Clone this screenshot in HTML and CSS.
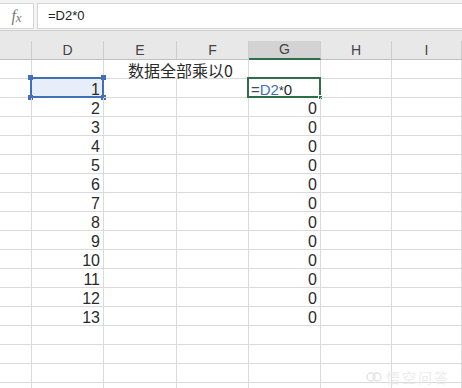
FILE: index.html
```html
<!DOCTYPE html>
<html lang="zh">
  <head>
    <meta charset="UTF-8" />
    <title>Sheet</title>
    <link rel="stylesheet" href="styles.css">
  </head>
  <body>
    <div class="formula-bar">
      <div class="fx"><i>f</i><i class="x">x</i></div>
      <div class="formula">=D2*0</div>
    </div>
    <div class="band"></div>
    <div class="sheet">
      <div class="h"></div><div class="h">D</div><div class="h">E</div><div class="h">F</div><div class="h active">G</div><div class="h">H</div><div class="h">I</div>

      <div class="c"></div><div class="c"></div><div class="c nb"><span class="title">数据全部乘以0</span></div><div class="c"></div><div class="c"></div><div class="c"></div><div class="c"></div>
      <div class="c"></div><div class="c n sel"><span class="box"><b class="hd tl"></b><b class="hd tr"></b><b class="hd bl"></b><b class="hd br"></b></span>1</div><div class="c"></div><div class="c"></div><div class="c edit"><span class="box"><b class="fill"></b></span><span class="eq">=</span><span class="ref">D2</span><span class="star">*</span>0</div><div class="c"></div><div class="c"></div>
      <div class="c"></div><div class="c n">2</div><div class="c"></div><div class="c"></div><div class="c n">0</div><div class="c"></div><div class="c"></div>
      <div class="c"></div><div class="c n">3</div><div class="c"></div><div class="c"></div><div class="c n">0</div><div class="c"></div><div class="c"></div>
      <div class="c"></div><div class="c n">4</div><div class="c"></div><div class="c"></div><div class="c n">0</div><div class="c"></div><div class="c"></div>
      <div class="c"></div><div class="c n">5</div><div class="c"></div><div class="c"></div><div class="c n">0</div><div class="c"></div><div class="c"></div>
      <div class="c"></div><div class="c n">6</div><div class="c"></div><div class="c"></div><div class="c n">0</div><div class="c"></div><div class="c"></div>
      <div class="c"></div><div class="c n">7</div><div class="c"></div><div class="c"></div><div class="c n">0</div><div class="c"></div><div class="c"></div>
      <div class="c"></div><div class="c n">8</div><div class="c"></div><div class="c"></div><div class="c n">0</div><div class="c"></div><div class="c"></div>
      <div class="c"></div><div class="c n">9</div><div class="c"></div><div class="c"></div><div class="c n">0</div><div class="c"></div><div class="c"></div>
      <div class="c"></div><div class="c n">10</div><div class="c"></div><div class="c"></div><div class="c n">0</div><div class="c"></div><div class="c"></div>
      <div class="c"></div><div class="c n">11</div><div class="c"></div><div class="c"></div><div class="c n">0</div><div class="c"></div><div class="c"></div>
      <div class="c"></div><div class="c n">12</div><div class="c"></div><div class="c"></div><div class="c n">0</div><div class="c"></div><div class="c"></div>
      <div class="c"></div><div class="c n">13</div><div class="c"></div><div class="c"></div><div class="c n">0</div><div class="c"></div><div class="c"></div>
      <div class="c"></div><div class="c"></div><div class="c"></div><div class="c"></div><div class="c"></div><div class="c"></div><div class="c"></div>
      <div class="c"></div><div class="c"></div><div class="c"></div><div class="c"></div><div class="c"></div><div class="c"></div><div class="c"></div>
      <div class="c"></div><div class="c"></div><div class="c"></div><div class="c"></div><div class="c"></div><div class="c"></div><div class="c"></div>
      <div class="c"></div><div class="c"></div><div class="c"></div><div class="c"></div><div class="c"></div><div class="c"></div><div class="c"></div>
    </div>
    <div class="mark">
      <svg width="16" height="12" viewBox="0 0 16 12"><circle cx="5" cy="6" r="4" fill="none" stroke="#e4e4e4" stroke-width="1.5"/><circle cx="11" cy="6" r="4" fill="none" stroke="#e4e4e4" stroke-width="1.5"/></svg>
      <span>悟空问答</span>
    </div>
  </body>
</html>
```

FILE: styles.css
```css
* {
  margin: 0;
  padding: 0;
  box-sizing: border-box;
}
body {
  width: 462px;
  height: 388px;
  overflow: hidden;
  background: #fff;
  font-family: "Liberation Sans", Arial, "Noto Sans CJK SC", sans-serif;
  color: #222;
  position: relative;
}
.formula-bar {
  height: 30px;
  background: #f3f3f3;
  padding-top: 3px;
  display: flex;
}
.fx {
  width: 34px;
  height: 26px;
  background: #fff;
  border: 1px solid #d6d6d6;
  border-left: none;
  font-family: "Liberation Serif", serif;
  font-size: 16px;
  color: #7a7a7a;
  display: flex;
  align-items: center;
  justify-content: center;
}
.fx .x {
  font-size: 13px;
  margin-top: 3px;
}
.formula {
  flex: 1;
  height: 26px;
  margin-left: 3px;
  background: #fff;
  border: 1px solid #d6d6d6;
  border-right: none;
  font-size: 13px;
  line-height: 24px;
  padding-left: 10px;
  color: #222;
}
.band {
  height: 11px;
  background: #e8e8e8;
  border-top: 1px solid #cfcfcf;
}
.sheet {
  display: grid;
  grid-template-columns: 32px 72px 73px 72px 72px 71px 1fr;
  grid-auto-rows: 19px;
}
.h {
  background: #e8e8e8;
  border-right: 1px solid #cdcdcd;
  border-bottom: 1px solid #bfbfbf;
  font-size: 14px;
  line-height: 18px;
  text-align: center;
  color: #444;
}
.h.active {
  background: #d3d3d3;
  border-bottom: 2px solid #2f6e4a;
  line-height: 17px;
}
.c {
  border-right: 1px solid #dadada;
  border-bottom: 1px solid #dadada;
  font-size: 16px;
  line-height: 16px;
  padding-top: 3px;
  white-space: nowrap;
  position: relative;
  color: #2a2a2a;
}
.c.nb {
  border-right-color: transparent;
}
.n {
  text-align: right;
  padding-right: 3px;
}
.title {
  position: relative;
  z-index: 1;
  display: inline-block;
  margin-left: 24px;
  margin-top: -1px;
  font-family: "Noto Sans CJK SC", sans-serif;
  font-size: 16px;
  line-height: 16px;
  background: #fff;
}
.sel {
  background: #e7eefa;
}
.box {
  position: absolute;
  left: -2px;
  top: -2px;
  right: -1px;
  bottom: -1px;
}
.sel .box {
  border: 2px solid #4270b6;
}
.hd {
  position: absolute;
  width: 5px;
  height: 5px;
  background: #4270b6;
}
.tl { left: -4px; top: -4px; }
.tr { right: -4px; top: -4px; }
.bl { left: -4px; bottom: -4px; }
.br { right: -4px; bottom: -4px; }
.edit {
  padding-left: 2px;
  font-size: 15px;
}
.edit .box {
  border: 2px solid #2f6e4a;
}
.fill {
  position: absolute;
  right: -4px;
  bottom: -4px;
  width: 5px;
  height: 5px;
  background: #2f6e4a;
  border: 1px solid #fff;
}
.eq {
  color: #3c4f62;
}
.ref {
  color: #3d6fb6;
}
.star {
  font-size: 12px;
}
.mark {
  position: absolute;
  left: 366px;
  top: 367px;
  display: flex;
  align-items: center;
  gap: 4px;
  font-family: "Noto Sans CJK SC", sans-serif;
  font-size: 14px;
  color: #ececec;
  letter-spacing: 2px;
}
```
